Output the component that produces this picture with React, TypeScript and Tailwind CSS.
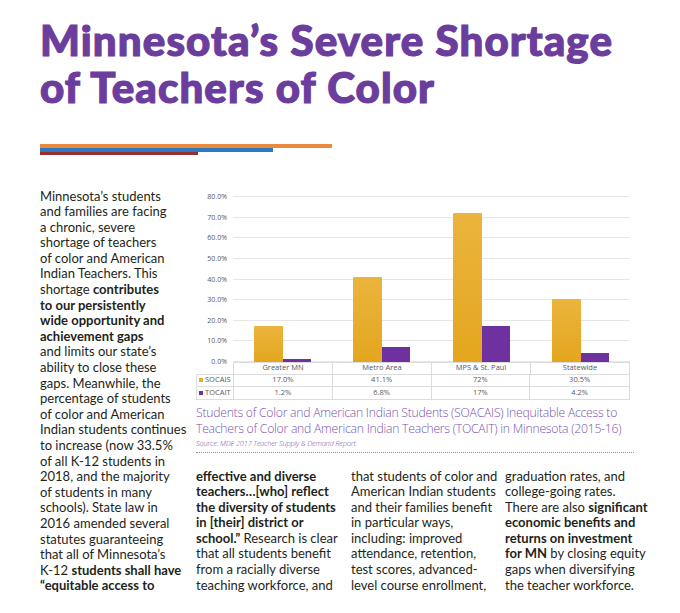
const BODY = "font-['Lato','Liberation_Sans',sans-serif]";

type Region = { name: string; soc: number; toc: number; socLabel: string; tocLabel: string };

const regions: Region[] = [
  { name: 'Greater MN', soc: 17.0, toc: 1.2, socLabel: '17.0%', tocLabel: '1.2%' },
  { name: 'Metro Area', soc: 41.1, toc: 6.8, socLabel: '41.1%', tocLabel: '6.8%' },
  { name: 'MPS & St. Paul', soc: 72, toc: 17, socLabel: '72%', tocLabel: '17%' },
  { name: 'Statewide', soc: 30.5, toc: 4.2, socLabel: '30.5%', tocLabel: '4.2%' },
]

const ticks = ['80.0%', '70.0%', '60.0%', '50.0%', '40.0%', '30.0%', '20.0%', '10.0%', '0.0%']
const PLOT_H = 165
const pct = (v: number) => (v / 80) * PLOT_H

function Chart() {
  return (
    <div className="w-[434px] text-[#595959] font-['Open_Sans','Liberation_Sans',sans-serif]">
      {/* plot */}
      <div className="relative h-[165px]">
        <div className="flex flex-col justify-between h-full">
          {ticks.map((t) => (
            <div key={t} className="flex items-center h-0">
              <span className="w-[37px] pr-[6px] text-right text-[7px] leading-none">{t}</span>
              <div className="flex-1 border-t border-[#e6e6e6]" />
            </div>
          ))}
        </div>
        <div className="absolute left-[37px] right-0 bottom-0 top-0 grid grid-cols-4">
          {regions.map((r) => (
            <div key={r.name} className="flex items-end justify-center">
              <div
                className="w-[29px] rounded-t-[1px] bg-gradient-to-b from-[#ebb43c] to-[#e4a61d]"
                style={{ height: pct(r.soc) }}
              />
              <div className="w-[28px] bg-[#7031a0]" style={{ height: pct(r.toc) }} />
            </div>
          ))}
        </div>
      </div>
      {/* data table */}
      <div className="text-[7.5px] leading-none">
        <div className="flex h-[12px]">
          <div className="w-[37px]" />
          <div className="flex-1 grid grid-cols-4 border-t border-l border-[#dcdcdc]">
            {regions.map((r) => (
              <div key={r.name} className="flex items-center justify-center border-r border-[#dcdcdc]">
                {r.name}
              </div>
            ))}
          </div>
        </div>
        <div className="flex h-[13px] border border-[#dcdcdc]">
          <div className="w-[36px] flex items-center gap-[2px] pl-[2px]">
            <span className="w-[4px] h-[4px] bg-[#e8ad25]" />
            SOCAIS
          </div>
          <div className="flex-1 grid grid-cols-4 border-l border-[#dcdcdc]">
            {regions.map((r) => (
              <div key={r.name} className="flex items-center justify-center border-r border-[#dcdcdc] last:border-r-0">
                {r.socLabel}
              </div>
            ))}
          </div>
        </div>
        <div className="flex h-[13px] border border-t-0 border-[#dcdcdc]">
          <div className="w-[36px] flex items-center gap-[2px] pl-[2px]">
            <span className="w-[4px] h-[4px] bg-[#7031a0]" />
            TOCAIT
          </div>
          <div className="flex-1 grid grid-cols-4 border-l border-[#dcdcdc]">
            {regions.map((r) => (
              <div key={r.name} className="flex items-center justify-center border-r border-[#dcdcdc] last:border-r-0">
                {r.tocLabel}
              </div>
            ))}
          </div>
        </div>
      </div>
    </div>
  )
}

function Lines({ lines }: { lines: React.ReactNode[] }) {
  return (
    <div className={`${BODY} text-[13px] leading-[15.6px] text-[#231f20]`}>
      {lines.map((l, i) => (
        <div key={i} className="whitespace-nowrap">
          {l}
        </div>
      ))}
    </div>
  )
}

const B = ({ children }: { children: React.ReactNode }) => <b className="font-bold">{children}</b>

export default function App() {
  return (
    <div className="w-[680px] h-[613px] bg-white overflow-hidden pl-[40px]">
      <h1 className="pt-[17px] text-[42px] leading-[47px] font-black tracking-[0.027em] text-[#6b3d9d] [-webkit-text-stroke:1.2px_#6b3d9d] font-['Lato','Liberation_Sans',sans-serif]">
        Minnesota’s Severe Shortage
        <br />
        of Teachers of Color
      </h1>

      <div className="mt-[33px] flex flex-col">
        <div className="w-[292px] h-[4px] bg-[#e98a3e]" />
        <div className="w-[233px] h-[4px] bg-[#2f7abf]" />
        <div className="w-[158px] h-[2.5px] bg-[#9a2d30]" />
      </div>

      <div className="mt-[34px] flex">
        <div className="w-[156px]">
          <Lines
            lines={[
              'Minnesota’s students',
              'and families are facing',
              'a chronic, severe',
              'shortage of teachers',
              'of color and American',
              'Indian Teachers. This',
              <>shortage <B>contributes</B></>,
              <B>to our persistently</B>,
              <B>wide opportunity and</B>,
              <B>achievement gaps</B>,
              'and limits our state’s',
              'ability to close these',
              'gaps. Meanwhile, the',
              'percentage of students',
              'of color and American',
              'Indian students continues',
              'to increase (now 33.5%',
              'of all K-12 students in',
              '2018, and the majority',
              'of students in many',
              'schools). State law in',
              '2016 amended several',
              'statutes guaranteeing',
              'that all of Minnesota’s',
              <>K-12 <B>students shall have</B></>,
              <B>“equitable access to</B>,
            ]}
          />
        </div>

        <div className="flex-1 flex flex-col">
          <div className="pt-[8px]">
            <Chart />
          </div>
          <div className="mt-[5px] w-[430px] text-[12.2px] leading-[16px] text-[#7b52ad] font-light font-['Open_Sans','Liberation_Sans',sans-serif] tracking-[-0.02em]">
            <div className="whitespace-nowrap">Students of Color and American Indian Students (SOACAIS) Inequitable Access to</div>
            <div className="whitespace-nowrap">Teachers of Color and American Indian Teachers (TOCAIT) in Minnesota (2015-16)</div>
            <div className="mt-[1px] text-[7.5px] leading-[10px] italic">Source: MDE 2017 Teacher Supply &amp; Demand Report.</div>
          </div>
          <div className="mt-[4px] w-[438px] border-t-[1.5px] border-dotted border-[#9d80c6]" />

          <div className="mt-[16px] flex">
            <div className="w-[155px]">
              <Lines
                lines={[
                  <B>effective and diverse</B>,
                  <B>teachers…[who] reflect</B>,
                  <B>the diversity of students</B>,
                  <B>in [their] district or</B>,
                  <><B>school.”</B> Research is clear</>,
                  'that all students benefit',
                  'from a racially diverse',
                  'teaching workforce, and',
                ]}
              />
            </div>
            <div className="w-[154px]">
              <Lines
                lines={[
                  'that students of color and',
                  'American Indian students',
                  'and their families benefit',
                  'in particular ways,',
                  'including: improved',
                  'attendance, retention,',
                  'test scores, advanced-',
                  'level course enrollment,',
                ]}
              />
            </div>
            <div className="w-[160px]">
              <Lines
                lines={[
                  'graduation rates, and',
                  'college-going rates.',
                  <>There are also <B>significant</B></>,
                  <B>economic benefits and</B>,
                  <B>returns on investment</B>,
                  <><B>for MN</B> by closing equity</>,
                  'gaps when diversifying',
                  'the teacher workforce.',
                ]}
              />
            </div>
          </div>
        </div>
      </div>
    </div>
  )
}
